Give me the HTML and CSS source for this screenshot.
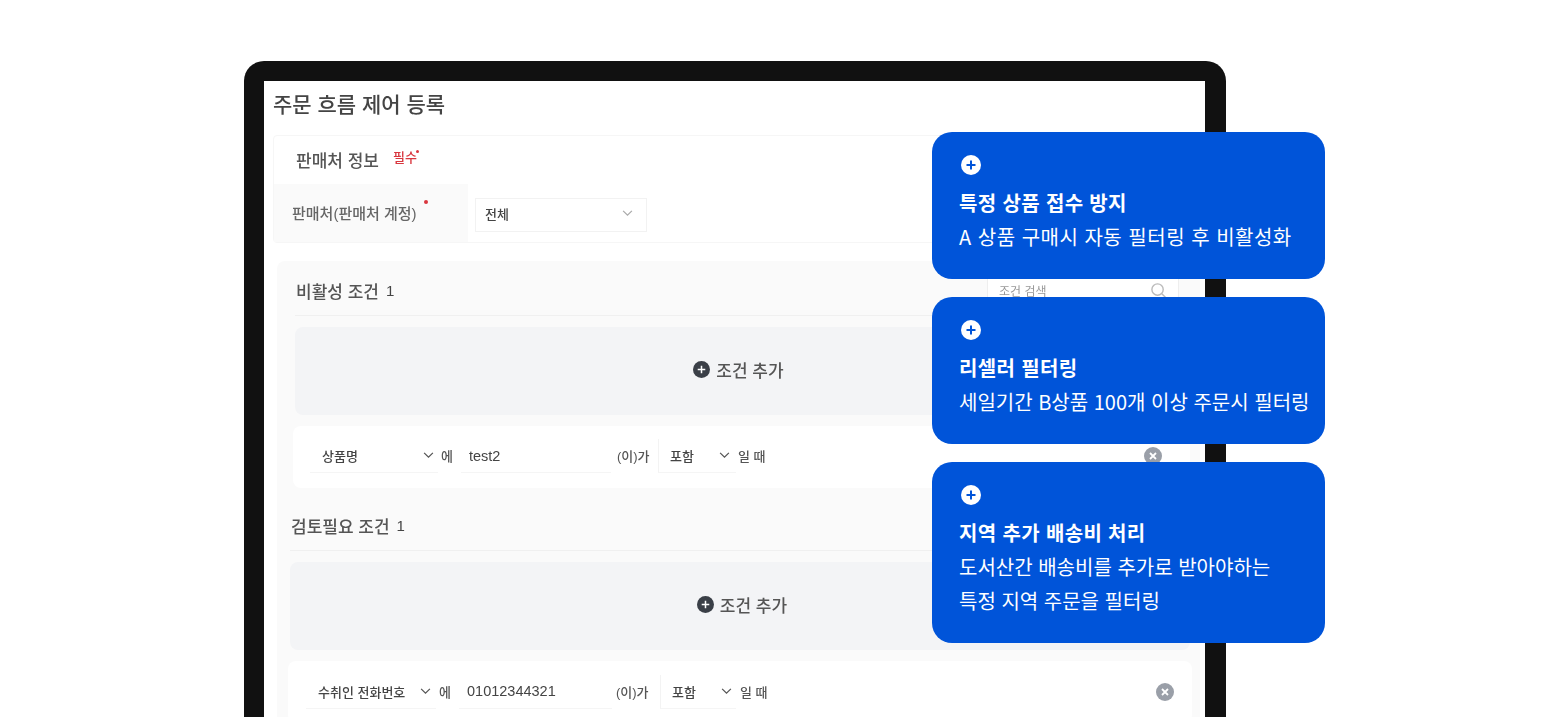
FILE: index.html
```html
<!DOCTYPE html>
<html lang="ko">
<head>
	<meta charset="UTF-8">
	<title>주문 흐름 제어 등록</title>
	<link rel="stylesheet" href="styles.css">
</head>
<body>
	<div class="stage">
		<div class="device">
			<div class="screen">
				<h1 class="page-title">주문 흐름 제어 등록</h1>

				<section class="info-card">
					<div class="info-head">
						<span class="info-name">판매처 정보</span>
						<span class="required">필수<i class="dot"></i></span>
					</div>
					<div class="info-row">
						<div class="info-label">판매처(판매처 계정)<i class="dot dot-label"></i></div>
						<div class="info-field">
							<div class="select select-all">
								<span>전체</span>
								<svg class="chevron light" viewBox="0 0 12 8"><path d="M1 1l5 5 5-5"/></svg>
							</div>
						</div>
					</div>
				</section>

				<section class="panel">
					<div class="cond-block first">
						<div class="cond-head">
							<span class="cond-name">비활성 조건</span>
							<span class="cond-count">1</span>
							<div class="search">
								<span>조건 검색</span>
								<svg viewBox="0 0 18 18"><circle cx="8" cy="8" r="6"/><path d="M12.5 12.5l4 4"/></svg>
							</div>
						</div>
						<div class="add-box">
							<svg class="add-icon" viewBox="0 0 18 18"><circle cx="9" cy="9" r="9"/><path d="M9 5v8M5 9h8"/></svg>
							<span>조건 추가</span>
						</div>
						<div class="cond-row">
							<div class="select select-name"><span>상품명</span><svg class="chevron" viewBox="0 0 12 8"><path d="M1 1l5 5 5-5"/></svg></div>
							<span class="word word-e">에</span>
							<div class="value">test2</div>
							<span class="word word-ga">(이)가</span>
							<div class="select select-op"><span>포함</span><svg class="chevron" viewBox="0 0 12 8"><path d="M1 1l5 5 5-5"/></svg></div>
							<span class="word word-when">일 때</span>
							<svg class="remove" viewBox="0 0 18 18"><circle cx="9" cy="9" r="9"/><path d="M6 6l6 6M12 6l-6 6"/></svg>
						</div>
					</div>

					<div class="cond-block second">
						<div class="cond-head">
							<span class="cond-name">검토필요 조건</span>
							<span class="cond-count">1</span>
						</div>
						<div class="add-box">
							<svg class="add-icon" viewBox="0 0 18 18"><circle cx="9" cy="9" r="9"/><path d="M9 5v8M5 9h8"/></svg>
							<span>조건 추가</span>
						</div>
						<div class="cond-row">
							<div class="select select-name"><span>수취인 전화번호</span><svg class="chevron" viewBox="0 0 12 8"><path d="M1 1l5 5 5-5"/></svg></div>
							<span class="word word-e">에</span>
							<div class="value">01012344321</div>
							<span class="word word-ga">(이)가</span>
							<div class="select select-op"><span>포함</span><svg class="chevron" viewBox="0 0 12 8"><path d="M1 1l5 5 5-5"/></svg></div>
							<span class="word word-when">일 때</span>
							<svg class="remove" viewBox="0 0 18 18"><circle cx="9" cy="9" r="9"/><path d="M6 6l6 6M12 6l-6 6"/></svg>
						</div>
					</div>
				</section>
			</div>
		</div>

		<div class="callouts">
			<div class="callout">
				<svg class="plus" viewBox="0 0 20 20"><circle cx="10" cy="10" r="10"/><path d="M10 5.500v9M5.500 10h9"/></svg>
				<p class="callout-title">특정 상품 접수 방지</p>
				<p class="callout-text wide">A 상품 구매시 자동 필터링 후 비활성화</p>
			</div>
			<div class="callout">
				<svg class="plus" viewBox="0 0 20 20"><circle cx="10" cy="10" r="10"/><path d="M10 5.500v9M5.500 10h9"/></svg>
				<p class="callout-title">리셀러 필터링</p>
				<p class="callout-text">세일기간 B상품 100개 이상 주문시 필터링</p>
			</div>
			<div class="callout">
				<svg class="plus" viewBox="0 0 20 20"><circle cx="10" cy="10" r="10"/><path d="M10 5.500v9M5.500 10h9"/></svg>
				<p class="callout-title">지역 추가 배송비 처리</p>
				<p class="callout-text">도서산간 배송비를 추가로 받아야하는<br>특정 지역 주문을 필터링</p>
			</div>
		</div>
	</div>
</body>
</html>
```

FILE: styles.css
```css
* {
	box-sizing: border-box;
}
html, body {
	margin: 0;
	height: 100%;
	background: #fff;
	overflow: hidden;
}
body {
	font-family: "Liberation Sans", "Noto Sans CJK KR", sans-serif;
	color: #444;
}
.stage {
	position: relative;
	width: 1548px;
	height: 717px;
	padding: 61px 0 0 244px;
	overflow: hidden;
}

/* device frame */
.device {
	width: 982px;
	height: 700px;
	padding: 20px 21px 0 20px;
	background: #111;
	border-radius: 20px 20px 0 0;
}
.screen {
	height: 100%;
	padding: 9px 0 0 9px;
	background: #fff;
	filter: blur(0.7px);
	overflow: hidden;
}
.page-title {
	margin: 0 0 17px;
	height: 28px;
	font-size: 21px;
	line-height: 30px;
	font-weight: 500;
	color: #444;
}

/* seller info */
.info-card {
	width: 923px;
	height: 108px;
	border: 1px solid #f6f6f6;
	border-radius: 4px;
}
.info-head {
	display: flex;
	align-items: center;
	gap: 14px;
	height: 48px;
	padding: 0 0 2px 22px;
}
.info-name {
	font-size: 17px;
	font-weight: 500;
	color: #555;
}
.required {
	position: relative;
	top: -3px;
	font-size: 13px;
	font-weight: 500;
	color: #d9363e;
}
.dot {
	position: absolute;
	top: 3px;
	right: -2px;
	width: 3px;
	height: 3px;
	border-radius: 50%;
	background: #d9363e;
}
.info-row {
	display: flex;
	height: 58px;
}
.info-label {
	position: relative;
	width: 194px;
	padding: 18px 0 0 18px;
	font-size: 15px;
	font-weight: 500;
	color: #666;
	background: #fafafa;
}
.dot-label {
	top: 16px;
	right: 40px;
	width: 4px;
	height: 4px;
}
.info-field {
	padding: 14px 0 0 7px;
}

/* selects and inputs */
.select {
	display: flex;
	align-items: center;
	justify-content: space-between;
	font-size: 13px;
	font-weight: 500;
	color: #444;
	background: #fff;
}
.select-all {
	width: 172px;
	height: 34px;
	padding: 0 12px 3px 9px;
	border: 1px solid #f2f2f2;
}
.chevron {
	width: 11px;
	height: 7px;
	fill: none;
	stroke: #555;
	stroke-width: 1.4;
}
.chevron.light {
	width: 13px;
	stroke: #aaa;
}

/* condition panel */
.panel {
	width: 923px;
	height: 520px;
	margin: 18px 0 0 4px;
	padding: 0 10px 0 15px;
	background: #fafafa;
	border-radius: 8px;
}
.cond-head {
	display: flex;
	align-items: center;
	gap: 7px;
	height: 55px;
	padding: 5px 0 0 1px;
	border-bottom: 1px solid #f0f0f0;
}
.cond-name {
	font-size: 17px;
	font-weight: 500;
	color: #555;
}
.cond-count {
	font-size: 15px;
	color: #444;
}
.search {
	display: flex;
	align-items: center;
	justify-content: space-between;
	width: 192px;
	height: 30px;
	margin-left: auto;
	margin-right: 3px;
	padding: 0 11px;
	font-size: 12px;
	color: #999;
	background: #fff;
	border: 1px solid #eee;
}
.search svg {
	width: 17px;
	height: 17px;
	fill: none;
	stroke: #bbb;
	stroke-width: 1.5;
}
.add-box {
	display: flex;
	align-items: center;
	justify-content: center;
	gap: 6px;
	height: 88px;
	margin-top: 11px;
	padding-bottom: 3px;
	font-size: 17px;
	font-weight: 500;
	color: #555;
	background: #f3f4f6;
	border-radius: 8px;
}
.add-icon {
	width: 17px;
	height: 17px;
}
.add-icon circle {
	fill: #3a3f47;
}
.add-icon path {
	stroke: #fff;
	stroke-width: 1.6;
}
.cond-row {
	display: flex;
	align-items: center;
	height: 62px;
	margin-top: 11px;
	background: #fff;
	border-radius: 8px;
	font-size: 13px;
}
.select-name {
	flex: none;
	height: 34px;
	border-bottom: 1px solid #f5f5f5;
}
.select-op {
	flex: none;
	height: 34px;
	border-left: 1px solid #f3f3f3;
	border-bottom: 1px solid #f5f5f5;
}
.word {
	flex: none;
	padding-bottom: 2px;
	font-size: 13px;
	font-weight: 500;
	color: #555;
}
.word-e {
	width: 12px;
	margin: 0 8px 0 3px;
}
.value {
	flex: none;
	height: 34px;
	padding-left: 8px;
	line-height: 32px;
	font-size: 14.5px;
	color: #444;
	background: #fff;
	border-bottom: 1px solid #f5f5f5;
}
.word-ga {
	width: 34px;
	white-space: nowrap;
}
.remove {
	width: 18px;
	height: 18px;
	margin-left: auto;
}
.remove circle {
	fill: #9a9fa8;
}
.remove path {
	stroke: #fff;
	stroke-width: 1.8;
}

/* the two blocks sit a few pixels apart in the shot */
.first {
	margin: 0 8px 0 3px;
}
.first .cond-row {
	margin: 11px -8px 0 -2px;
	padding: 0 28px 2px 17px;
}
.first .select-name {
	width: 128px;
	padding: 0 4px 0 12px;
}
.first .value {
	width: 150px;
	line-height: 34px;
}
.first .word-ga {
	margin: 0 7px 0 6px;
}
.first .select-op {
	width: 78px;
	padding: 0 6px 0 11px;
}
.first .word-when {
	margin-left: 2px;
}
.second {
	margin: 0 0 0 -2px;
}
.second .cond-head {
	margin-top: 8px;
}
.second .add-box {
	padding-left: 4px;
}
.second .cond-row {
	margin: 11px -2px 0 -2px;
	padding: 0 18px 0 18px;
}
.second .select-name {
	width: 130px;
	padding: 0 5px 0 12px;
}
.second .value {
	width: 153px;
	line-height: 33px;
}
.second .word-ga {
	margin: 0 10px 0 4px;
}
.second .select-op {
	width: 76px;
	padding: 0 4px 0 11px;
}
.second .word-when {
	margin-left: 4px;
}

/* blue callouts over the frame */
.callouts {
	position: absolute;
	top: 132px;
	left: 932px;
	display: flex;
	flex-direction: column;
	gap: 18px;
	width: 393px;
}
.callout {
	padding: 23px 10px 25px 27px;
	color: #fff;
	background: #0054d9;
	border-radius: 20px;
}
.plus {
	display: block;
	width: 20px;
	height: 20px;
	margin: 0 0 11px 2px;
}
.plus circle {
	fill: #fff;
}
.plus path {
	stroke: #0054d9;
	stroke-width: 2;
}
.callout-title,
.callout-text {
	margin: 0;
	font-size: 20px;
	line-height: 34px;
	white-space: nowrap;
	font-family: "Noto Sans CJK KR", sans-serif;
}
.callout-title {
	font-weight: 700;
	letter-spacing: 0.35px;
}
.callout-text {
	font-weight: 400;
}
.callout-text.wide {
	letter-spacing: 0.5px;
}
```
